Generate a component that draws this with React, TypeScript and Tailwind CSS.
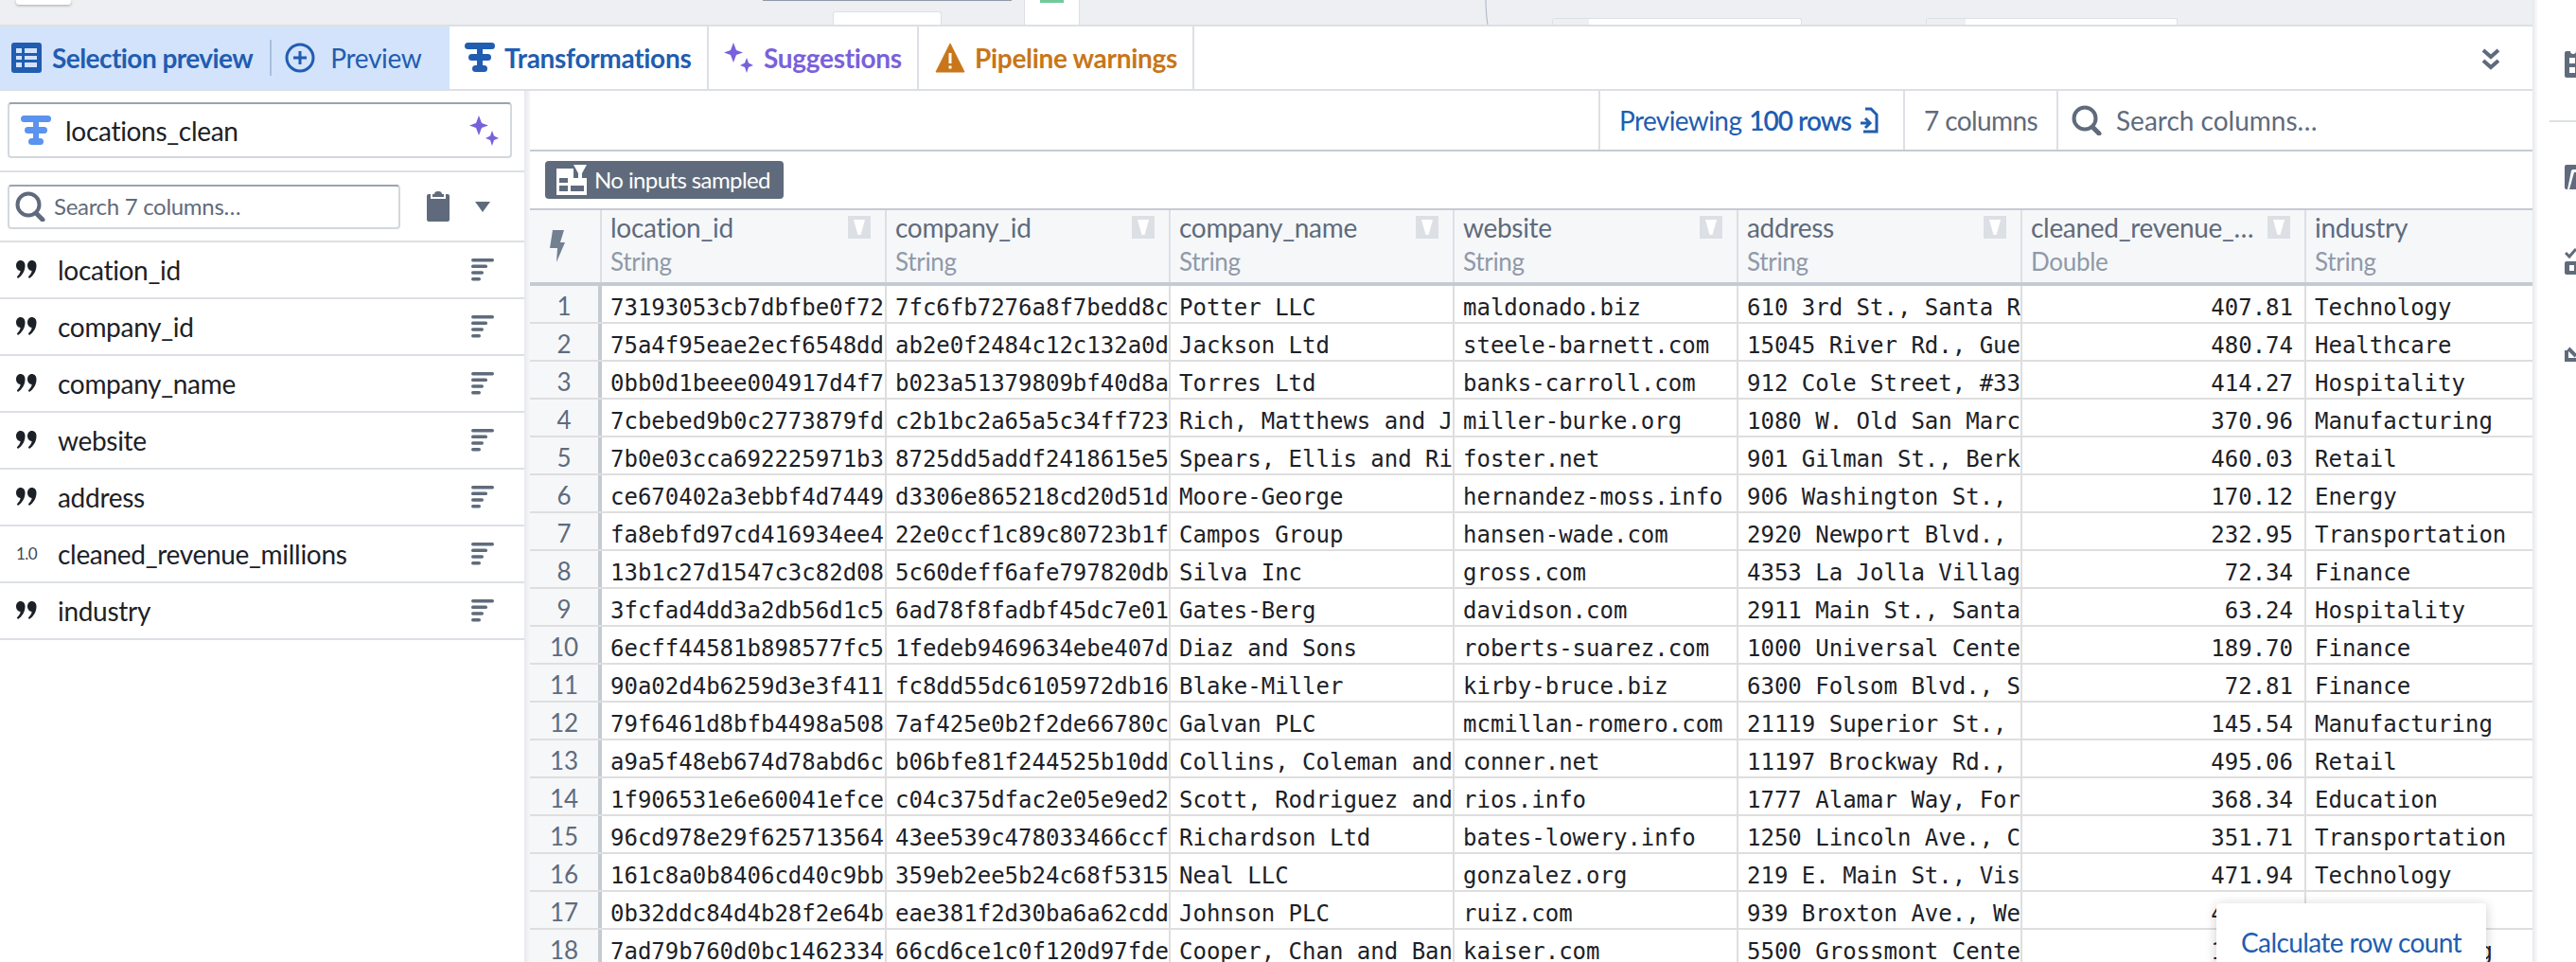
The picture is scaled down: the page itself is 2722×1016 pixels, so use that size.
import React from 'react';

const sans = 'font-["Lato","Open_Sans",sans-serif]';

const rows = [
  ['73193053cb7dbfbe0f724', '7fc6fb7276a8f7bedd8c4', 'Potter LLC', 'maldonado.biz', '610 3rd St., Santa Ro', '407.81', 'Technology'],
  ['75a4f95eae2ecf6548dd9', 'ab2e0f2484c12c132a0d9', 'Jackson Ltd', 'steele-barnett.com', '15045 River Rd., Guer', '480.74', 'Healthcare'],
  ['0bb0d1beee004917d4f72', 'b023a51379809bf40d8a1', 'Torres Ltd', 'banks-carroll.com', '912 Cole Street, #33', '414.27', 'Hospitality'],
  ['7cbebed9b0c2773879fd', 'c2b1bc2a65a5c34ff7234', 'Rich, Matthews and Jo', 'miller-burke.org', '1080 W. Old San Marco', '370.96', 'Manufacturing'],
  ['7b0e03cca692225971b3', '8725dd5addf2418615e5', 'Spears, Ellis and Riv', 'foster.net', '901 Gilman St., Berke', '460.03', 'Retail'],
  ['ce670402a3ebbf4d7449', 'd3306e865218cd20d51d', 'Moore-George', 'hernandez-moss.info', '906 Washington St., C', '170.12', 'Energy'],
  ['fa8ebfd97cd416934ee4', '22e0ccf1c89c80723b1f4', 'Campos Group', 'hansen-wade.com', '2920 Newport Blvd.,', '232.95', 'Transportation'],
  ['13b1c27d1547c3c82d08', '5c60deff6afe797820db', 'Silva Inc', 'gross.com', '4353 La Jolla Villag', '72.34', 'Finance'],
  ['3fcfad4dd3a2db56d1c59', '6ad78f8fadbf45dc7e014', 'Gates-Berg', 'davidson.com', '2911 Main St., Santa', '63.24', 'Hospitality'],
  ['6ecff44581b898577fc5', '1fedeb9469634ebe407d9', 'Diaz and Sons', 'roberts-suarez.com', '1000 Universal Cente', '189.70', 'Finance'],
  ['90a02d4b6259d3e3f4114', 'fc8dd55dc6105972db16', 'Blake-Miller', 'kirby-bruce.biz', '6300 Folsom Blvd., S', '72.81', 'Finance'],
  ['79f6461d8bfb4498a5084', '7af425e0b2f2de66780c', 'Galvan PLC', 'mcmillan-romero.com', '21119 Superior St., C', '145.54', 'Manufacturing'],
  ['a9a5f48eb674d78abd6c9', 'b06bfe81f244525b10dd4', 'Collins, Coleman and', 'conner.net', '11197 Brockway Rd.,', '495.06', 'Retail'],
  ['1f906531e6e60041efce', 'c04c375dfac2e05e9ed24', 'Scott, Rodriguez and', 'rios.info', '1777 Alamar Way, For', '368.34', 'Education'],
  ['96cd978e29f625713564', '43ee539c478033466ccf1', 'Richardson Ltd', 'bates-lowery.info', '1250 Lincoln Ave., C', '351.71', 'Transportation'],
  ['161c8a0b8406cd40c9bb', '359eb2ee5b24c68f53159', 'Neal LLC', 'gonzalez.org', '219 E. Main St., Vis', '471.94', 'Technology'],
  ['0b32ddc84d4b28f2e64b9', 'eae381f2d30ba6a62cdd4', 'Johnson PLC', 'ruiz.com', '939 Broxton Ave., We', '412.38', 'Finance'],
  ['7ad79b760d0bc1462334', '66cd6ce1c0f120d97fde', 'Cooper, Chan and Ban', 'kaiser.com', '5500 Grossmont Cente', '128.45', 'Manufacturing'],
];

const columns = [
  { name: 'location_id', type: 'String', width: 'w-[301px]' },
  { name: 'company_id', type: 'String', width: 'w-[300px]' },
  { name: 'company_name', type: 'String', width: 'w-[300px]' },
  { name: 'website', type: 'String', width: 'w-[300px]' },
  { name: 'address', type: 'String', width: 'w-[300px]' },
  { name: 'cleaned_revenue_…', type: 'Double', width: 'w-[300px]' },
  { name: 'industry', type: 'String', width: 'flex-1' },
];

const sidebarColumns = [
  { name: 'location_id', icon: 'quote' },
  { name: 'company_id', icon: 'quote' },
  { name: 'company_name', icon: 'quote' },
  { name: 'website', icon: 'quote' },
  { name: 'address', icon: 'quote' },
  { name: 'cleaned_revenue_millions', icon: 'number' },
  { name: 'industry', icon: 'quote' },
];

function TransformIcon({ className }: { className: string }) {
  return (
    <svg viewBox="0 0 32 32" className={className} fill="currentColor">
      <rect x="0" y="0" width="32" height="7" rx="3.5" />
      <rect x="4" y="12" width="24" height="7" rx="3.5" />
      <rect x="8" y="24" width="16" height="7" rx="3.5" />
      <rect x="13" y="3" width="6" height="24" />
    </svg>
  );
}

function SparkleIcon({ className }: { className: string }) {
  return (
    <svg viewBox="0 0 32 32" className={className} fill="#7961db">
      <path d="M10 0 L13 8 L20 10.5 L13 13 L10 21 L7 13 L0 10.5 L7 8 Z" />
      <path d="M24 16 L26 21.5 L31 24 L26 26 L24 32 L22 26 L17 24 L22 21.5 Z" />
    </svg>
  );
}

function SearchIcon({ className }: { className: string }) {
  return (
    <svg viewBox="0 0 32 32" className={className} fill="none" stroke="#5f6b7c">
      <circle cx="14" cy="14" r="11.5" strokeWidth="4" />
      <path d="M22 23 L29 30" strokeWidth="5" strokeLinecap="round" />
    </svg>
  );
}

function QuoteIcon() {
  return (
    <svg viewBox="0 0 22 20" className="h-[20px] w-[22px]" fill="#1c2127">
      <path d="M4.5 0 C7.5 0 9.5 2.2 9.5 5.5 C9.5 11 6.5 16 2 19 L0.8 17.4 C3 15.4 4.4 13.2 4.6 11 C2 11 0 8.6 0 5.6 C0 2.4 2 0 4.5 0 Z" />
      <path d="M16.5 0 C19.5 0 21.5 2.2 21.5 5.5 C21.5 11 18.5 16 14 19 L12.8 17.4 C15 15.4 16.4 13.2 16.6 11 C14 11 12 8.6 12 5.6 C12 2.4 14 0 16.5 0 Z" />
    </svg>
  );
}

function BarsIcon() {
  return (
    <svg viewBox="0 0 24 24" className="h-[24px] w-[24px]" fill="#5f6b7c">
      <rect x="0" y="0" width="24" height="3.5" rx="1.7" />
      <rect x="0" y="6.6" width="17" height="3.5" rx="1.7" />
      <rect x="0" y="13.2" width="13" height="3.5" rx="1.7" />
      <rect x="0" y="20" width="10" height="3.5" rx="1.7" />
    </svg>
  );
}

function FilterButton() {
  return (
    <div className="flex h-[24px] w-[24px] shrink-0 items-center justify-center bg-[#dce0e5]">
      <svg viewBox="0 0 12 18" className="h-[18px] w-[12px]" fill="#ffffff">
        <path d="M0 1 H12 L7.5 17 H4.5 Z" />
      </svg>
    </div>
  );
}

function CanvasNode({ className, left }: { className: string; left: string }) {
  return (
    <div className={`absolute flex overflow-hidden rounded-t-[3px] border border-b-0 border-[#dce0e5] bg-white ${className}`}>
      <div className={`h-full bg-[#edeff2] ${left}`} />
    </div>
  );
}

function TopCanvas() {
  return (
    <div className="relative h-[26px] w-full shrink-0 bg-[#edeff2]">
      <div className="absolute left-[17px] top-0 h-[5px] w-[58px] rounded-b-[3px] bg-white shadow-[0_1px_3px_rgba(0,0,0,0.3)]" />
      <div className="absolute left-[806px] top-0 h-px w-[263px] bg-[#8f99a8]" />
      <div className="absolute left-[880px] top-[12px] h-[14px] w-[115px] rounded-t-[3px] border border-b-0 border-[#dce0e5] bg-white" />
      <div className="absolute left-[1082px] top-0 flex h-[26px] w-[59px] justify-center border-x border-[#dce0e5] bg-white">
        <div className="h-[3px] w-[25px] bg-[#72ca9b]" />
      </div>
      <svg viewBox="0 0 6 26" className="absolute left-[1569px] top-0 h-[26px] w-[6px]" fill="none" stroke="#abb3bf" strokeWidth="1">
        <path d="M1 0 C1 10 2 20 3 26" />
      </svg>
      <CanvasNode className="left-[1640px] top-[19px] h-[7px] w-[264px]" left="w-[38px]" />
      <CanvasNode className="left-[2035px] top-[19px] h-[7px] w-[266px]" left="w-[41px]" />
    </div>
  );
}

function Tabs() {
  return (
    <div className={`flex h-[70px] w-full shrink-0 items-stretch border-y-2 border-[#dce0e5] text-[28px] ${sans}`}>
      <div className="flex w-[475px] items-center bg-[#d3e3fc] pl-[12px]">
        <svg viewBox="0 0 32 32" className="h-[32px] w-[32px]" fill="#215db0">
          <path fillRule="evenodd" d="M3 0 H29 a3 3 0 0 1 3 3 V29 a3 3 0 0 1 -3 3 H3 a3 3 0 0 1 -3 -3 V3 a3 3 0 0 1 3 -3 Z M5 6 V11 H11 V6 Z M14 6 V11 H27 V6 Z M5 14 V18 H11 V14 Z M14 14 V18 H27 V14 Z M5 21 V26 H11 V21 Z M14 21 V26 H27 V21 Z" />
        </svg>
        <span className="ml-[11px] font-bold tracking-[-0.55px] text-[#215db0]">Selection preview</span>
        <div className="ml-[18px] h-[38px] w-[2px] bg-[#a9bfdf]" />
        <svg viewBox="0 0 32 32" className="ml-[14px] h-[32px] w-[32px]" fill="none" stroke="#215db0" strokeWidth="3">
          <circle cx="16" cy="16" r="14" />
          <path d="M16 9 V23 M9 16 H23" />
        </svg>
        <span className="ml-[16px] tracking-[-0.3px] text-[#215db0]">Preview</span>
      </div>
      <div className="flex w-[274px] items-center border-r-2 border-[#dce0e5] pl-[16px]">
        <TransformIcon className="h-[32px] w-[32px] text-[#215db0]" />
        <span className="ml-[10px] font-bold tracking-[-0.3px] text-[#215db0]">Transformations</span>
      </div>
      <div className="flex w-[222px] items-center border-r-2 border-[#dce0e5] pl-[16px]">
        <SparkleIcon className="h-[34px] w-[32px]" />
        <span className="ml-[10px] font-bold tracking-[-0.3px] text-[#7961db]">Suggestions</span>
      </div>
      <div className="flex w-[291px] items-center border-r-2 border-[#dce0e5] pl-[17px]">
        <svg viewBox="0 0 32 32" className="h-[32px] w-[32px]">
          <path d="M16 1 L31 31 H1 Z" fill="#c87619" stroke="#c87619" strokeWidth="1" strokeLinejoin="round" />
          <path d="M14.5 11 H17.5 V22 H14.5 Z M14.5 24.5 H17.5 V27.5 H14.5 Z" fill="#ffffff" />
        </svg>
        <span className="ml-[10px] font-bold tracking-[-0.3px] text-[#c87619]">Pipeline warnings</span>
      </div>
      <div className="flex flex-1 items-center justify-end pr-[34px] pt-[3px]">
        <svg viewBox="0 0 20 24" className="h-[24px] w-[20px]" fill="none" stroke="#5f6b7c" strokeWidth="4">
          <path d="M2 2 L10 9 L18 2 M2 13 L10 20 L18 13" />
        </svg>
      </div>
    </div>
  );
}

function LeftPanel() {
  return (
    <div className={`flex h-full w-[554px] shrink-0 flex-col tracking-[-0.3px] ${sans}`}>
      <div className="shrink-0 border-b-2 border-[#dce0e5] px-[8px] pb-[13px] pt-[12px]">
        <div className="flex h-[59px] w-[533px] items-center rounded-[4px] border-2 border-[#d3d8de] border-t-[#9aa3ae] pl-[12px] pr-[11px]">
          <TransformIcon className="h-[32px] w-[32px] text-[#5b93ee]" />
          <span className="ml-[15px] flex-1 text-[28px] text-[#1c2127]">locations_clean</span>
          <SparkleIcon className="h-[32px] w-[32px]" />
        </div>
      </div>
      <div className="flex h-[74px] shrink-0 items-center border-b-2 border-[#dce0e5] pl-[8px]">
        <div className="flex h-[47px] w-[415px] items-center rounded-[4px] border-2 border-[#d3d8de] border-t-[#9aa3ae] pl-[6px]">
          <SearchIcon className="h-[32px] w-[32px]" />
          <span className="ml-[9px] text-[24px] text-[#5f6b7c]">Search 7 columns…</span>
        </div>
        <svg viewBox="0 0 24 32" className="ml-[28px] h-[32px] w-[24px]" fill="#5f6b7c">
          <path d="M8 3 a4 3 0 0 1 8 0 h2 v3 h-12 v-3 Z" />
          <path d="M2 3 H4 V8 H20 V3 H22 a2 2 0 0 1 2 2 V30 a2 2 0 0 1 -2 2 H2 a2 2 0 0 1 -2 -2 V5 a2 2 0 0 1 2 -2 Z" />
        </svg>
        <svg viewBox="0 0 16 11" className="ml-[27px] h-[11px] w-[16px]" fill="#5f6b7c">
          <path d="M0 0 H16 L8 11 Z" />
        </svg>
      </div>
      {sidebarColumns.map((col) => (
        <div key={col.name} className="flex h-[60px] shrink-0 items-center border-b-2 border-[#dce0e5] pl-[17px] pr-[32px]">
          <div className="flex w-[44px] shrink-0 items-center">
            {col.icon === 'quote' ? <QuoteIcon /> : <span className="text-[17px] tracking-[-0.5px] text-[#404854]">1.0</span>}
          </div>
          <span className="flex-1 text-[28px] text-[#1c2127]">{col.name}</span>
          <BarsIcon />
        </div>
      ))}
    </div>
  );
}

function Toolbar() {
  return (
    <div className={`flex h-[64px] shrink-0 justify-end border-b-2 border-[#c5cbd3] text-[28px] ${sans}`}>
      <div className="flex w-[322px] items-center border-l-2 border-[#dce0e5] pl-[20px]">
        <span className="tracking-[-0.6px] text-[#215db0]">Previewing</span>
        <span className="ml-[8px] font-semibold tracking-[-1px] text-[#215db0]">100 rows</span>
        <svg viewBox="0 0 20 28" className="ml-[9px] h-[28px] w-[20px]" fill="none" stroke="#215db0" strokeWidth="3">
          <path d="M6 2 H12 L18 8 V26 H4 M1 17 H10 M6 12 L11 17 L6 22" />
        </svg>
      </div>
      <div className="flex w-[162px] items-center border-l-2 border-[#dce0e5] pl-[20px] tracking-[-0.6px] text-[#5f6b7c]">7 columns</div>
      <div className="flex w-[503px] items-center border-l-2 border-[#dce0e5] pl-[14px]">
        <SearchIcon className="h-[32px] w-[32px]" />
        <span className="ml-[15px] text-[#5f6b7c]">Search columns…</span>
      </div>
    </div>
  );
}

function SampleTag() {
  return (
    <div className="flex h-[60px] shrink-0 items-center pl-[16px]">
      <div className={`flex h-[40px] w-[252px] items-center rounded-[4px] bg-[#5f6b7c] pl-[12px] text-[24px] tracking-[-0.6px] text-white ${sans}`}>
        <svg viewBox="0 0 32 32" className="h-[32px] w-[32px]" fill="#ffffff">
          <path fillRule="evenodd" d="M0 4 H18 V14 H32 V32 H0 Z M3 14 V19 H12 V14 Z M15 22 V28 H29 V22 Z M3 22 V28 H12 V22 Z" />
          <path d="M18 0 H32 L27 9 V17 H23 V9 Z" />
        </svg>
        <span className="ml-[8px]">No inputs sampled</span>
      </div>
    </div>
  );
}

function DataTable() {
  return (
    <div className="flex min-h-0 flex-1 flex-col overflow-hidden">
      <div className={`flex h-[82px] shrink-0 border-y-2 border-[#c5cbd3] border-b-4 bg-[#f6f7f9] tracking-[-0.3px] ${sans}`}>
        <div className="flex w-[76px] shrink-0 items-center justify-center border-r-2 border-[#dce0e5] pr-[26px] pl-[10px]">
          <svg viewBox="0 0 16 34" className="h-[34px] w-[16px] shrink-0" fill="#738091">
            <path d="M3 0 H15 L11 13 H16 L7 34 L8 19 H0 Z" />
          </svg>
        </div>
        {columns.map((col, i) => (
          <div key={col.name} className={`${col.width} flex shrink-0 flex-col justify-center border-[#dce0e5] pb-[5px] pl-[9px] pr-[15px] ${i < 6 ? 'border-r-2' : ''}`}>
            <div className="flex items-center justify-between">
              <span className="text-[28px] leading-[36px] text-[#5f6b7c]">{col.name}</span>
              {i < 6 && <FilterButton />}
            </div>
            <span className="text-[26px] leading-[36px] text-[#8f99a8]">{col.type}</span>
          </div>
        ))}
      </div>
      {rows.map((row, r) => (
        <div key={r} className="flex h-[40px] shrink-0 border-b-2 border-[#dedede] font-['DejaVu_Sans_Mono',monospace] text-[24px]">
          <div className={`flex w-[76px] shrink-0 items-center justify-center border-r-4 border-[#c5cbd3] bg-[#f6f7f9] pt-[5px] text-[26px] text-[#5f6b7c] ${sans}`}>
            {r + 1}
          </div>
          {row.map((cell, c) => (
            <div
              key={c}
              className={`${columns[c].width} flex shrink-0 items-center overflow-hidden whitespace-pre border-[#dedede] pl-[9px] pt-[7px] text-[#1c2127] ${c < 6 ? 'border-r-2' : ''} ${c === 5 ? 'justify-end pr-[12px]' : ''}`}
            >
              {cell}
            </div>
          ))}
        </div>
      ))}
    </div>
  );
}

function RightRail() {
  return (
    <div className="flex h-full w-[40px] shrink-0 flex-col overflow-hidden pl-[28px]">
      <svg viewBox="0 0 30 30" className="mt-[52px] h-[30px] w-[30px] shrink-0" fill="#5f6b7c">
        <path fillRule="evenodd" d="M2 2 H30 V30 H2 a2 2 0 0 1 -2 -2 V4 a2 2 0 0 1 2 -2 Z M5 9 V15 H11 V9 Z M5 19 V25 H11 V19 Z" />
        <circle cx="9" cy="2" r="3" fill="#ffffff" />
      </svg>
      <div className="mt-[45px] -ml-[16px] h-[2px] w-[28px] shrink-0 bg-[#dce0e5]" />
      <svg viewBox="0 0 30 26" className="mt-[45px] h-[26px] w-[30px] shrink-0" fill="#5f6b7c">
        <path d="M2 0 H14 V5 H9 a2 2 0 0 0 -2 1.5 L3 26 H2 a2 2 0 0 1 -2 -2 V2 a2 2 0 0 1 2 -2 Z" />
        <path d="M10 8 H30 V26 H5 Z" />
      </svg>
      <svg viewBox="0 0 30 28" className="mt-[62px] h-[28px] w-[30px] shrink-0" fill="none" stroke="#5f6b7c">
        <path d="M1 5 L5 9 L12 1" strokeWidth="3" />
        <path fillRule="evenodd" d="M2 14 H30 V28 H2 a2 2 0 0 1 -2 -2 V16 a2 2 0 0 1 2 -2 Z M5 18 V24 H10 V18 Z" fill="#5f6b7c" stroke="none" />
      </svg>
      <svg viewBox="0 0 30 20" className="mt-[72px] h-[20px] w-[30px] shrink-0" fill="none" stroke="#5f6b7c" strokeWidth="4">
        <path d="M2 8 V18 H30 M4 6 L12 14" />
      </svg>
    </div>
  );
}

export default function App() {
  return (
    <div className="flex h-[1016px] w-[2722px] overflow-hidden bg-white">
      <div className="relative flex h-full w-[2676px] shrink-0 flex-col">
        <TopCanvas />
        <Tabs />
        <div className="flex min-h-0 flex-1">
          <LeftPanel />
          <div className="h-full w-[6px] shrink-0 bg-gradient-to-r from-[#e6e8ec] to-[#f6f7f9]" />
          <div className="flex h-full min-w-0 flex-1 flex-col">
            <Toolbar />
            <SampleTag />
            <DataTable />
          </div>
        </div>
        <div className={`absolute left-[2342px] top-[954px] h-[70px] w-[285px] rounded-[4px] bg-white pl-[26px] pt-[20px] text-[28px] tracking-[-0.6px] text-[#215db0] shadow-[0_2px_12px_rgba(17,20,24,0.22)] ${sans}`}>
          Calculate row count
        </div>
      </div>
      <div className="h-full w-[6px] shrink-0 bg-gradient-to-r from-[#e6e8ec] to-white" />
      <RightRail />
    </div>
  );
}
